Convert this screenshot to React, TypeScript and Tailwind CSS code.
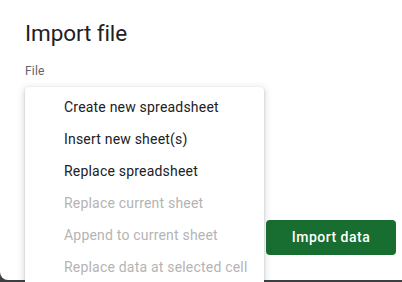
export default function App() {
  const items = [
    { label: "Create new spreadsheet", disabled: false },
    { label: "Insert new sheet(s)", disabled: false },
    { label: "Replace spreadsheet", disabled: false },
    { label: "Replace current sheet", disabled: true },
    { label: "Append to current sheet", disabled: true },
    { label: "Replace data at selected cell", disabled: true },
  ];
  return (
    <div className="w-[402px] h-[282px] bg-[#3c4043] overflow-hidden" style={{ fontFamily: "Roboto, 'Noto Sans', sans-serif" }}>
      <div className="relative h-[280px] w-[410px] bg-white rounded-b-[8px] pl-[25px] pt-[17px]">
        <div className="text-[22.5px] leading-[32px] text-[#202124] tracking-[-0.1px]">Import file</div>
        <div className="mt-[14px] text-[12px] leading-[16px] text-[#5f6368] tracking-[0.2px]">File</div>
        <div className="flex justify-end pr-[14px] mt-[141px]">
          <button className="w-[130px] h-[35px] rounded-[4px] bg-[#186d30] text-white text-[14px] font-medium tracking-[0.5px]">
            Import data
          </button>
        </div>
        <div className="absolute left-[25px] top-[87px] w-[239px] h-[220px] bg-white rounded-[4px] shadow-[0_2px_6px_2px_rgba(60,64,67,0.15),0_1px_2px_rgba(60,64,67,0.3)] pt-[4px]">
          {items.map((it) => (
            <div
              key={it.label}
              className={
                "h-[32px] flex items-center pl-[39px] text-[14px] tracking-[0.2px] " +
                (it.disabled ? "text-[#b4b4b4]" : "text-[#202124]")
              }
            >
              {it.label}
            </div>
          ))}
        </div>
      </div>
    </div>
  );
}
